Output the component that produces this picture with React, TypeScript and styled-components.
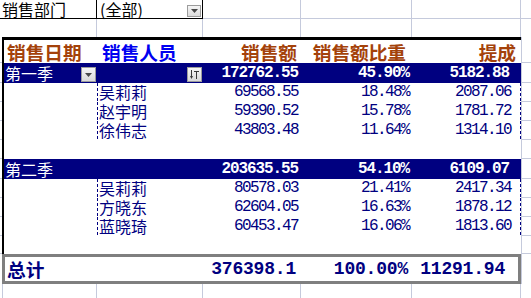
import React from "react";
import styled, { createGlobalStyle, css } from "styled-components";

const GRID = "#c5cadc";
const NAVY = "#000080";
const BROWN = "#a4420a";
const BLUE = "#0000f0";
const TOTAL_BORDER = "#7f7f7f";

const GlobalStyle = createGlobalStyle`
  html, body { margin: 0; padding: 0; background: #ffffff; }
  body {
    width: 531px;
    height: 298px;
    overflow: hidden;
    font-family: "Noto Sans CJK SC", "Noto Sans", sans-serif;
  }
  * { box-sizing: border-box; }
`;

const Sheet = styled.div`
  display: flex;
  flex-direction: column;
  width: 531px;
`;

const Row = styled.div<{ $h: number }>`
  display: grid;
  grid-template-columns: 2px 95px 106px 98px 111px 109px 1fr;
  height: ${(p) => p.$h}px;
`;

/* ---------- plain spreadsheet cells ---------- */

const Gutter = styled.div<{ $tick?: boolean }>`
  ${(p) => p.$tick && css`border-bottom: 1px solid ${GRID};`}
`;

const SideFill = styled.div<{ $line?: boolean; $tick?: boolean }>`
  ${(p) => p.$line && css`border-left: 1px solid ${GRID};`}
  ${(p) => p.$tick && css`border-bottom: 1px solid ${GRID};`}
`;

const GridCell = styled.div<{ $bottom?: boolean; $span?: number; $leftLine?: boolean }>`
  grid-column: span ${(p) => p.$span ?? 1};
  border-right: 1px solid ${GRID};
  ${(p) => p.$bottom && css`border-bottom: 1px solid ${GRID};`}
  ${(p) => p.$leftLine && css`border-left: 1px solid ${GRID};`}
`;

const PageFieldLabel = styled.div`
  grid-column: span 2;
  display: flex;
  align-items: center;
  padding-left: 2px;
  border-right: 1px solid #000;
  border-bottom: 1px solid #000;
  font-size: 16px;
  line-height: 17px;
  color: #000;
  white-space: nowrap;
`;

const PageFieldValue = styled.div`
  display: flex;
  align-items: center;
  padding-left: 3px;
  padding-right: 1px;
  border-right: 1px solid #000;
  border-bottom: 1px solid #000;
  font-size: 16px;
  line-height: 17px;
  color: #000;
  white-space: nowrap;
`;

/* ---------- pivot cells ---------- */

const PCell = styled.div<{ $first?: boolean; $right?: boolean; $pl?: number; $pr?: number }>`
  display: flex;
  align-items: center;
  justify-content: ${(p) => (p.$right ? "flex-end" : "flex-start")};
  padding-left: ${(p) => p.$pl ?? 0}px;
  padding-right: ${(p) => p.$pr ?? 0}px;
  white-space: nowrap;
  line-height: 17px;
  ${(p) => p.$first && css`border-left: 2px solid #000;`}
`;

const HeadCell = styled(PCell)<{ $color: string }>`
  border-top: 3px solid #000;
  font-size: 18.67px;
  line-height: 20px;
  font-weight: 700;
  color: ${(p) => p.$color};
`;

const GroupCell = styled(PCell)`
  background: ${NAVY};
  color: #ffffff;
  font-size: 16px;
`;

const DetailCell = styled(PCell)<{ $dashL?: boolean; $dashR?: boolean }>`
  color: ${NAVY};
  font-size: 16px;
  ${(p) =>
    p.$dashL &&
    css`
      background-image: repeating-linear-gradient(to bottom, ${NAVY} 0 3px, transparent 3px 5px);
      background-size: 1px 100%;
      background-repeat: no-repeat;
      background-position: left top;
    `}
  ${(p) =>
    p.$dashR &&
    css`
      background-image: repeating-linear-gradient(to bottom, ${NAVY} 0 3px, transparent 3px 5px);
      background-size: 1px 100%;
      background-repeat: no-repeat;
      background-position: right top;
    `}
`;

const TotalCell = styled(PCell)<{ $last?: boolean }>`
  border-top: 3px solid ${TOTAL_BORDER};
  border-bottom: 3px solid ${TOTAL_BORDER};
  ${(p) => p.$first && css`border-left: 3px solid ${TOTAL_BORDER};`}
  ${(p) => p.$last && css`border-right: 3px solid ${TOTAL_BORDER};`}
  color: ${NAVY};
  font-size: 18.67px;
  line-height: 20px;
  font-weight: 700;
`;

const Num = styled.span<{ $size: number; $bold?: boolean; $ls: number }>`
  font-family: "Liberation Mono", "DejaVu Sans Mono", monospace;
  font-size: ${(p) => p.$size}px;
  font-weight: ${(p) => (p.$bold ? 700 : 400)};
  letter-spacing: ${(p) => p.$ls}px;
`;

const DropBtn = styled.div<{ $w: number; $h: number }>`
  width: ${(p) => p.$w}px;
  height: ${(p) => p.$h}px;
  flex: none;
  margin-left: auto;
  display: flex;
  align-items: center;
  justify-content: center;
  background: linear-gradient(#f6f6f6, #dadada);
  border: 1px solid #9c9c9c;
  align-self: flex-end;
  margin-bottom: 1px;
`;

const Arrow = () => (
  <svg width="7" height="4" viewBox="0 0 7 4">
    <polygon points="0,0 7,0 3.5,4" fill="#4a4a4a" />
  </svg>
);

const SortFilter = () => (
  <svg width="9" height="9" viewBox="0 0 9 9">
    <rect x="1" y="0" width="1" height="7" fill="#3a3a3a" />
    <polygon points="0,6 3,6 1.5,9" fill="#3a3a3a" />
    <rect x="4" y="1" width="5" height="1" fill="#3a3a3a" />
    <rect x="6" y="1" width="1" height="8" fill="#3a3a3a" />
  </svg>
);

/* ---------- data ---------- */

type Person = { name: string; sales: string; share: string; bonus: string };
type Group = {
  label: string;
  sales: string;
  share: string;
  bonus: string;
  buttons?: boolean;
  blankH: number;
  people: Person[];
};

const groups: Group[] = [
  {
    label: "第一季",
    sales: "172762.55",
    share: "45.90%",
    bonus: "5182.88",
    buttons: true,
    blankH: 19,
    people: [
      { name: "吴莉莉", sales: "69568.55", share: "18.48%", bonus: "2087.06" },
      { name: "赵宇明", sales: "59390.52", share: "15.78%", bonus: "1781.72" },
      { name: "徐伟志", sales: "43803.48", share: "11.64%", bonus: "1314.10" },
    ],
  },
  {
    label: "第二季",
    sales: "203635.55",
    share: "54.10%",
    bonus: "6109.07",
    blankH: 18,
    people: [
      { name: "吴莉莉", sales: "80578.03", share: "21.41%", bonus: "2417.34" },
      { name: "方晓东", sales: "62604.05", share: "16.63%", bonus: "1878.12" },
      { name: "蓝晓琦", sales: "60453.47", share: "16.06%", bonus: "1813.60" },
    ],
  },
];

const DETAIL_NUM = { $size: 16, $ls: -1.6 };
const GROUP_NUM = { $size: 16, $ls: -1.1, $bold: true };
const TOTAL_NUM = { $size: 18, $ls: -0.2, $bold: true };

const GroupBlock: React.FC<{ g: Group }> = ({ g }) => (
  <>
    <Row $h={20}>
      <Gutter $tick />
      <GroupCell $first $pl={1} $pr={1}>
        {g.label}
        {g.buttons && (
          <DropBtn $w={15} $h={15}>
            <Arrow />
          </DropBtn>
        )}
      </GroupCell>
      <GroupCell $pr={1}>
        {g.buttons && (
          <DropBtn $w={15} $h={15}>
            <SortFilter />
          </DropBtn>
        )}
      </GroupCell>
      <GroupCell $right $pr={3}>
        <Num {...GROUP_NUM}>{g.sales}</Num>
      </GroupCell>
      <GroupCell $right $pr={3}>
        <Num {...GROUP_NUM}>{g.share}</Num>
      </GroupCell>
      <GroupCell $right $pr={12}>
        <Num {...GROUP_NUM}>{g.bonus}</Num>
      </GroupCell>
      <SideFill $line $tick />
    </Row>
    {g.people.map((p, i) => (
      <Row $h={19} key={i}>
        <Gutter $tick />
        <DetailCell $first />
        <DetailCell $dashL $pl={2}>
          {p.name}
        </DetailCell>
        <DetailCell $right $pr={3}>
          <Num {...DETAIL_NUM}>{p.sales}</Num>
        </DetailCell>
        <DetailCell $right $pr={3}>
          <Num {...DETAIL_NUM}>{p.share}</Num>
        </DetailCell>
        <DetailCell $right $dashR $pr={10}>
          <Num {...DETAIL_NUM}>{p.bonus}</Num>
        </DetailCell>
        <SideFill $line $tick />
      </Row>
    ))}
    <Row $h={g.blankH}>
      <Gutter $tick />
      <DetailCell $first />
      <DetailCell />
      <DetailCell />
      <DetailCell />
      <DetailCell />
      <SideFill $line $tick />
    </Row>
  </>
);

export default function App() {
  return (
    <>
      <GlobalStyle />
      <Sheet>
        <Row $h={19}>
          <PageFieldLabel>销售部门</PageFieldLabel>
          <PageFieldValue>
            (全部)
            <DropBtn $w={14} $h={12}>
              <Arrow />
            </DropBtn>
          </PageFieldValue>
          <GridCell $bottom />
          <GridCell $bottom />
          <GridCell $bottom />
          <SideFill $tick />
        </Row>
        <Row $h={18}>
          <GridCell $span={2} />
          <GridCell />
          <GridCell />
          <GridCell />
          <GridCell />
          <SideFill />
        </Row>

        <Row $h={26}>
          <Gutter $tick />
          <HeadCell $first $color={BROWN} $pl={3}>
            销售日期
          </HeadCell>
          <HeadCell $color={BLUE} $pl={5}>
            销售人员
          </HeadCell>
          <HeadCell $color={BROWN} $right $pr={4}>
            销售额
          </HeadCell>
          <HeadCell $color={BROWN} $right $pr={6}>
            销售额比重
          </HeadCell>
          <HeadCell $color={BROWN} $right $pr={5}>
            提成
          </HeadCell>
          <SideFill $line $tick />
        </Row>

        {groups.map((g, i) => (
          <GroupBlock g={g} key={i} />
        ))}

        <Row $h={30}>
          <Gutter />
          <TotalCell $first $pl={2}>
            总计
          </TotalCell>
          <TotalCell />
          <TotalCell $right $pr={5}>
            <Num {...TOTAL_NUM}>376398.1</Num>
          </TotalCell>
          <TotalCell $right $pr={4}>
            <Num {...TOTAL_NUM}>100.00%</Num>
          </TotalCell>
          <TotalCell $right $last $pr={13}>
            <Num {...TOTAL_NUM}>11291.94</Num>
          </TotalCell>
          <SideFill $line />
        </Row>

        <Row $h={20}>
          <Gutter />
          <GridCell $leftLine />
          <GridCell />
          <GridCell />
          <GridCell />
          <GridCell />
          <SideFill />
        </Row>
      </Sheet>
    </>
  );
}
